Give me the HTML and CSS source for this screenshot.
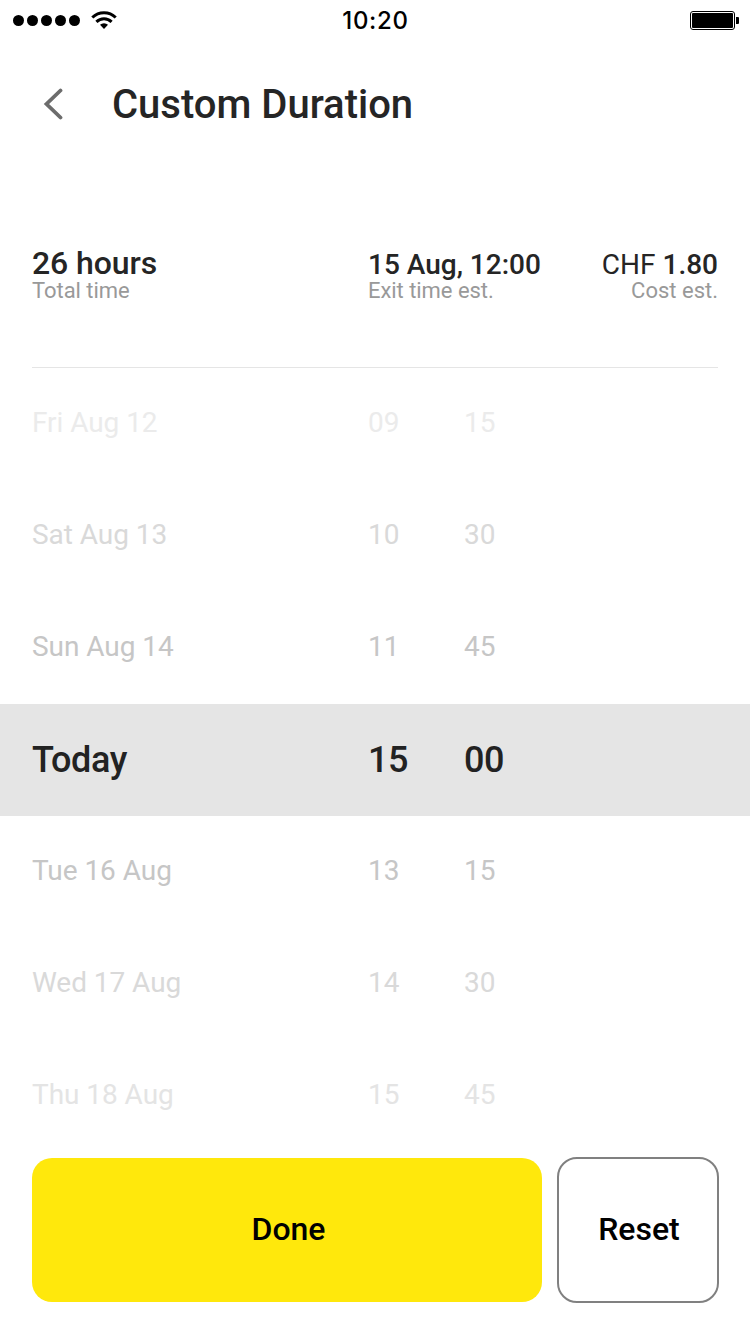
FILE: index.html
```
<!DOCTYPE html>
<html lang="en">
<head>
<meta charset="utf-8">
<title>Custom Duration</title>
<link rel="stylesheet" href="styles.css">
</head>
<body>
<main class="screen">
  <div class="status">
    <div class="signal">
      <i class="dot"></i><i class="dot"></i><i class="dot"></i><i class="dot"></i><i class="dot"></i>
      <svg class="wifi" width="26" height="18" viewBox="0 0 26 18"><g fill="none" stroke="#000" stroke-width="3"><path d="M1.300 6.500a16.800 16.800 0 0 1 23.400 0"/><path d="M5.400 10.800a10.900 10.900 0 0 1 15.200 0"/></g><path d="M13 18l-4-4.200a5.800 5.800 0 0 1 8 0z"/></svg>
    </div>
    <time class="clock">10:20</time>
    <svg class="battery" width="49" height="19" viewBox="0 0 49 19"><rect x=".5" y=".5" width="44" height="18" rx="2.500" fill="none" stroke="#000"/><rect x="2" y="2" width="41" height="15" rx="1"/><path d="M46 6h2q1 0 1 1v5q0 1-1 1h-2z"/></svg>
  </div>
  <header class="header">
    <svg class="back" width="20" height="32" viewBox="0 0 20 32"><path d="M17.500 2.500L3.500 16l14 13.500" fill="none" stroke="#6c6c6c" stroke-width="3.800" stroke-linecap="round"/></svg>
    <h1 class="title">Custom Duration</h1>
  </header>
  <section class="summary">
    <div class="stat stat-total"><strong class="value">26 hours</strong><span class="label">Total time</span></div>
    <div class="stat"><strong class="value">15 Aug, 12:00</strong><span class="label">Exit time est.</span></div>
    <div class="stat stat-cost"><strong class="value"><span class="currency">CHF</span> 1.80</strong><span class="label">Cost est.</span></div>
  </section>
  <section class="picker">
    <div class="row first"><span>Fri Aug 12</span><span>09</span><span>15</span></div>
    <div class="row mid"><span>Sat Aug 13</span><span>10</span><span>30</span></div>
    <div class="row near"><span>Sun Aug 14</span><span>11</span><span>45</span></div>
    <div class="row selected"><span>Today</span><span>15</span><span>00</span></div>
    <div class="row near"><span>Tue 16 Aug</span><span>13</span><span>15</span></div>
    <div class="row mid"><span>Wed 17 Aug</span><span>14</span><span>30</span></div>
    <div class="row last"><span>Thu 18 Aug</span><span>15</span><span>45</span></div>
  </section>
  <footer class="actions">
    <button class="button done">Done</button>
    <button class="button reset">Reset</button>
  </footer>
</main>
</body>
</html>
```
FILE: styles.css
```
* { box-sizing: border-box; }
body { margin: 0; background: #fff; color: #252525; font-family: Roboto, sans-serif; }
.screen { width: 750px; height: 1334px; display: flex; flex-direction: column; overflow: hidden; }
.status { height: 40px; flex: none; display: grid; grid-template-columns: 1fr auto 1fr; align-items: center; padding: 1px 11px 0 13px; color: #000; }
.signal { display: flex; align-items: center; gap: 3px; }
.dot { width: 11px; height: 11px; border-radius: 50%; background: #000; }
.wifi { margin: 0 0 2px 8px; }
.clock { font: 500 24px/38px Inter, sans-serif; letter-spacing: 0.7px; padding: 1px 1px 0 0; }
.battery { justify-self: end; }
.header { height: 128px; flex: none; display: flex; align-items: center; padding-left: 43px; }
.title { margin: 2px 0 0 49px; font-size: 40px; font-weight: 500; line-height: 48px; }
.summary { height: 200px; flex: none; margin: 0 32px; padding-top: 78px; display: grid; grid-template-columns: 336px 1fr auto; border-bottom: 1px solid #e5e5e5; }
.stat { display: flex; flex-direction: column; white-space: nowrap; }
.value { height: 34px; padding-top: 2px; font-size: 28px; font-weight: 500; line-height: 34px; }
.stat-total .value { padding-top: 0; font-size: 32px; letter-spacing: -0.1px; line-height: 34px; }
.currency { font-weight: 400; }
.label { font-size: 22px; line-height: 22px; color: #999; letter-spacing: -0.05px; }
.stat-cost { text-align: right; }
.stat-cost .label { letter-spacing: 0; }
.row { height: 112px; display: grid; grid-template-columns: 336px 96px 1fr; align-items: center; padding: 0 32px 2px; font-size: 28px; line-height: 34px; letter-spacing: -0.05px; }
.first { color: #ebebeb; }
.last { color: #e4e4e4; }
.mid { color: #d9d9d9; }
.near { color: #c6c6c6; }
.selected { background: #e5e5e5; padding-bottom: 0; font-size: 36px; font-weight: 500; letter-spacing: -0.4px; color: #222; }
.actions { display: flex; gap: 15px; padding: 5px 31px 0 32px; }
.button { height: 144px; border: 0; border-radius: 20px; font: 500 32px Roboto, sans-serif; color: #000; padding: 0 0 2px; }
.done { width: 510px; background: #ffe80c; margin-top: 1px; padding-left: 3px; }
.reset { width: 162px; height: 146px; background: #fff; border: 2px solid #808080; padding-left: 2px; }
```
